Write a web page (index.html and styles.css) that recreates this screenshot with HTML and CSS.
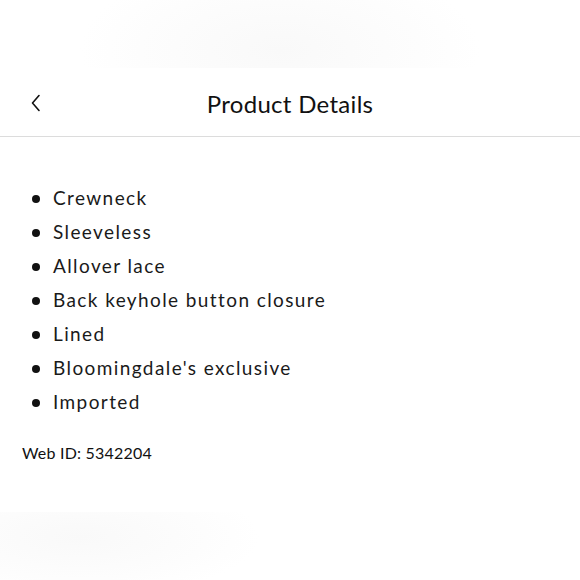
FILE: index.html
```html
<!DOCTYPE html>
<html>
<head>
<meta charset="utf-8">
<link rel="stylesheet" href="styles.css">
</head>
<body>
<div class="page">
  <div class="top-strip"></div>
  <header class="header">
    <button class="back" aria-label="Back">
      <svg width="12" height="18" viewBox="0 0 12 18"><path d="M9 1.5 L2.5 9 L9 16.5" fill="none" stroke="#111" stroke-width="1.6" stroke-linecap="round" stroke-linejoin="round"/></svg>
    </button>
    <h1 class="title">Product Details</h1>
  </header>
  <main class="content">
    <ul class="features">
      <li>Crewneck</li>
      <li>Sleeveless</li>
      <li>Allover lace</li>
      <li>Back keyhole button closure</li>
      <li>Lined</li>
      <li>Bloomingdale's exclusive</li>
      <li>Imported</li>
    </ul>
    <p class="webid">Web ID: 5342204</p>
  </main>
  <div class="bottom-strip"></div>
</div>
</body>
</html>
```
FILE: styles.css
```css
html, body {
  margin: 0;
  padding: 0;
  background: #fff;
}
body {
  font-family: Lato, "Noto Sans", sans-serif;
  color: #111;
  width: 580px;
  height: 580px;
  overflow: hidden;
}
.page {
  display: flex;
  flex-direction: column;
  height: 580px;
}
.top-strip {
  height: 68px;
  flex: none;
  background: radial-gradient(ellipse 200px 90px at 280px 50px, #f9f9f9, #fdfdfd 70%, #fff 100%);
}
.header {
  flex: none;
  height: 68px;
  border-bottom: 1px solid #dcdcdc;
  display: flex;
  align-items: center;
  justify-content: center;
  position: relative;
}
.back {
  position: absolute;
  left: 30px;
  top: 26px;
  border: 0;
  background: none;
  padding: 0;
  width: 14px;
  height: 18px;
  display: flex;
}
.title {
  margin: 0;
  font-size: 24px;
  font-weight: 400;
  letter-spacing: 0.3px;
  color: #111;
  padding-top: 2px;
}
.content {
  flex: 1;
  padding: 44px 0 0 22px;
}
.features {
  margin: 0;
  padding: 0 0 0 31px;
  list-style: none;
}
.features li {
  font-size: 19px;
  line-height: 34px;
  letter-spacing: 1.4px;
  position: relative;
  color: #1a1a1a;
}
.features li::before {
  content: "";
  position: absolute;
  left: -21px;
  top: 14px;
  width: 8px;
  height: 8px;
  border-radius: 50%;
  background: #111;
}
.webid {
  margin: 24px 0 0 0;
  font-size: 16px;
  letter-spacing: 0.2px;
  color: #111;
}
.bottom-strip {
  flex: none;
  height: 68px;
  background: radial-gradient(ellipse 180px 60px at 80px 25px, #f9f9f9, #fdfdfd 70%, #fff 100%);
}
```
